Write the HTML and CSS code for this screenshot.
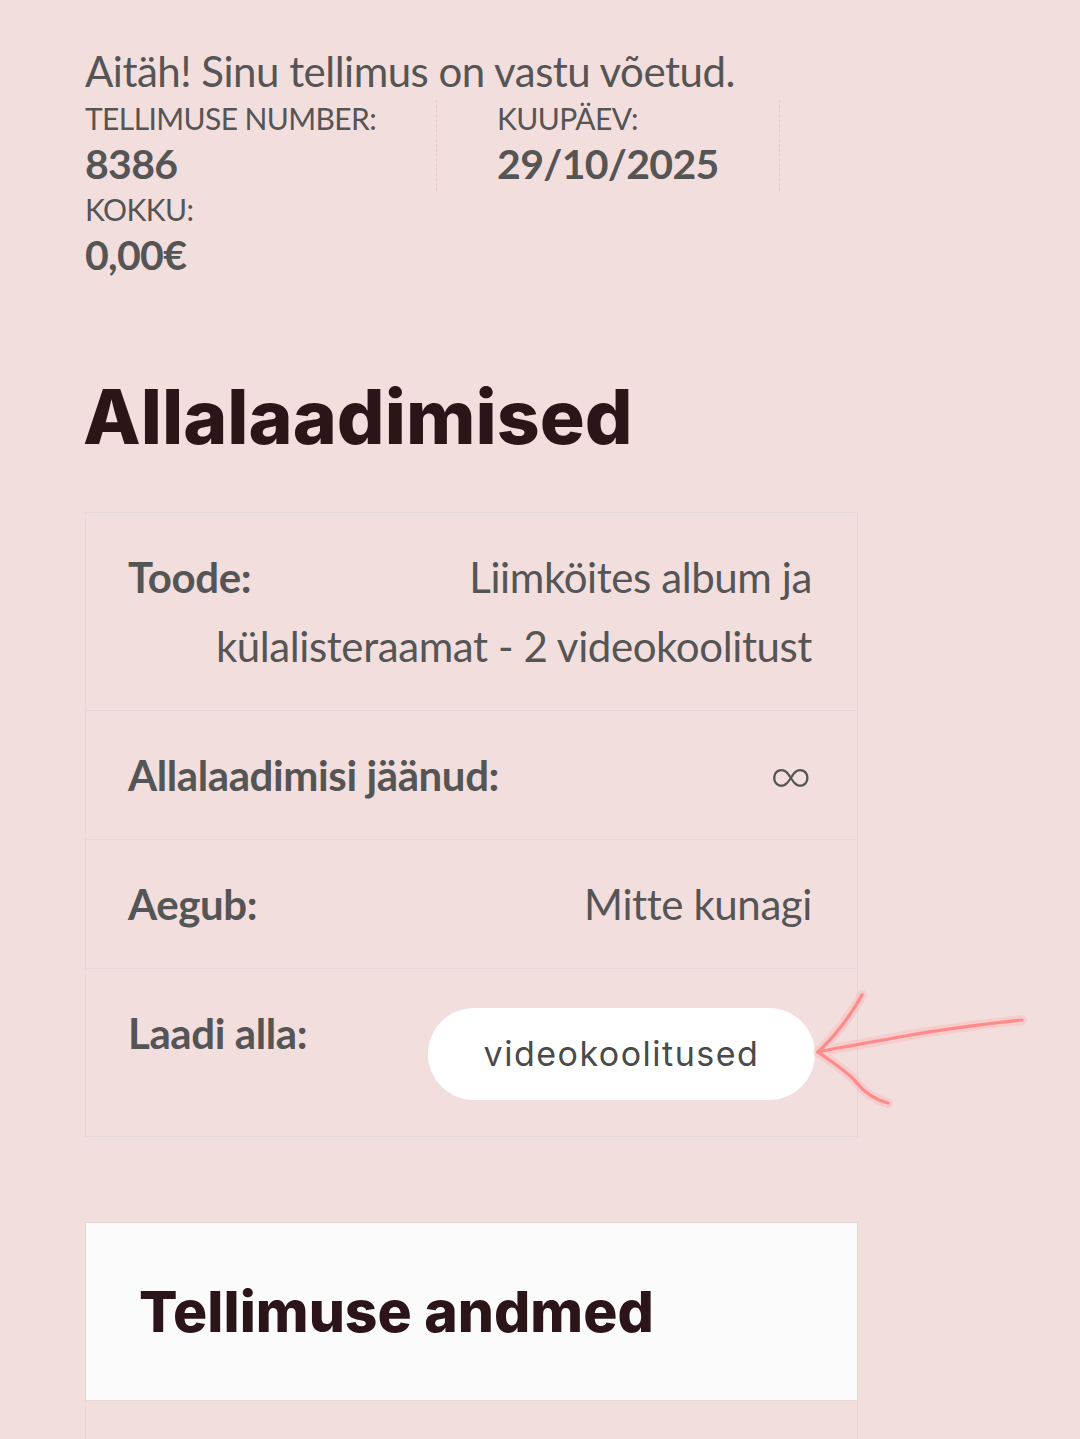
FILE: index.html
```html
<!DOCTYPE html>
<html lang="et">
<head>
<meta charset="utf-8">
<title>Tellimus vastu võetud</title>
<link rel="stylesheet" href="styles.css">
</head>
<body>
<main class="page">
  <p class="thanks">Aitäh! Sinu tellimus on vastu võetud.</p>
  <ul class="overview">
    <li class="item">TELLIMUSE NUMBER:<strong>8386</strong></li>
    <li class="item">KUUPÄEV:<strong>29/10/2025</strong></li>
    <li class="item item-last">KOKKU:<strong>0,00€</strong></li>
  </ul>

  <h2 class="section-title">Allalaadimised</h2>
  <div class="downloads">
    <div class="row"><span class="label">Toode:</span><span class="value">Liimköites album ja</span> <span class="value">külalisteraamat - 2 videokoolitust</span></div>
    <div class="row"><span class="label">Allalaadimisi jäänud:</span><span class="infinity">∞</span></div>
    <div class="row"><span class="label">Aegub:</span><span class="value">Mitte kunagi</span></div>
    <div class="row row-last"><span class="label">Laadi alla:</span><a class="btn" href="#">videokoolitused</a></div>
  </div>

  <section class="details">
    <div class="details-head"><h2 class="details-title">Tellimuse andmed</h2></div>
    <div class="details-row"></div>
  </section>
</main>
<svg class="annotation" width="1080" height="1439" viewBox="0 0 1080 1439" aria-hidden="true">
  <g fill="none" stroke-linecap="round" stroke-linejoin="round">
    <g stroke="#ff9a9a" stroke-width="10" opacity="0.25">
      <path d="M1022 1020 C985 1024 945 1029 905 1036 C872 1042 842 1047 818 1052"/>
      <path d="M862 995 C852 1013 836 1035 818 1052"/>
      <path d="M818 1052 C832 1062 848 1072 856 1082 C864 1092 876 1100 888 1103"/>
    </g>
    <g stroke="#ff8a8a" stroke-width="3.2">
      <path d="M1022 1020 C985 1024 945 1029 905 1036 C872 1042 842 1047 818 1052"/>
      <path d="M862 995 C852 1013 836 1035 818 1052"/>
      <path d="M818 1052 C832 1062 848 1072 856 1082 C864 1092 876 1100 888 1103"/>
    </g>
  </g>
</svg>
</body>
</html>
```
FILE: styles.css
```css
html, body {
  margin: 0;
  padding: 0;
}
body {
  background: #f3dede;
  font-family: Lato, "Liberation Sans", sans-serif;
  color: #555555;
  width: 1080px;
  min-height: 1439px;
  overflow: hidden;
  position: relative;
}
.page {
  width: 773px;
  margin-left: 85px;
  padding-top: 44px;
}
.thanks {
  margin: 0;
  font-size: 42px;
  letter-spacing: -0.5px;
  line-height: 54px;
}
.overview {
  list-style: none;
  margin: 2px 0 0;
  padding: 0;
  display: flex;
  flex-wrap: wrap;
}
.item {
  font-size: 30px;
  letter-spacing: -0.6px;
  line-height: 37px;
  padding-right: 60px;
  margin-right: 60px;
  border-right: 1px dashed #e2cccc;
}
.item-last {
  border-right: none;
}
.item strong {
  display: block;
  font-size: 41px;
  letter-spacing: -0.7px;
  line-height: 54px;
  font-weight: 700;
}
.section-title {
  margin: 90px 0 0 -2px;
  font-family: Inter, "Liberation Sans", sans-serif;
  font-weight: 800;
  font-size: 75px;
  line-height: 90px;
  color: #2b1519;
}
.downloads {
  margin-top: 50px;
  border: 1px solid #e5d7d7;
  border-bottom: none;
}
.row {
  padding: 30px 45px 29px 42px;
  font-size: 42px;
  letter-spacing: -0.4px;
  line-height: 69px;
  text-align: right;
  border-bottom: 1px solid #e5d7d7;
}
.row::after {
  content: "";
  display: block;
  clear: both;
}
.label {
  float: left;
  font-weight: 700;
  margin-right: 20px;
}
.infinity {
  font-size: 58px;
  font-weight: 300;
  line-height: 0;
  vertical-align: -4px;
}
.btn {
  display: inline-block;
  vertical-align: top;
  width: 387px;
  height: 92px;
  margin: 9px -3px 7px 0;
  border-radius: 46px;
  background: #ffffff;
  color: #4a4a4a;
  text-decoration: none;
  text-align: center;
  font-family: Inter, "Liberation Sans", sans-serif;
  font-size: 34px;
  line-height: 92px;
  letter-spacing: 1.5px;
}
.details {
  margin-top: 85px;
  border: 1px solid #e5d7d7;
  border-bottom: none;
}
.details-head {
  background: #fbfbfb;
  padding: 55px 53px;
  border-bottom: 1px solid #e5d7d7;
}
.details-title {
  margin: 0;
  font-family: Inter, "Liberation Sans", sans-serif;
  font-weight: 800;
  font-size: 57px;
  line-height: 67px;
  color: #2b1519;
}
.details-row {
  height: 80px;
}
.annotation {
  position: absolute;
  left: 0;
  top: 0;
  pointer-events: none;
}
```
